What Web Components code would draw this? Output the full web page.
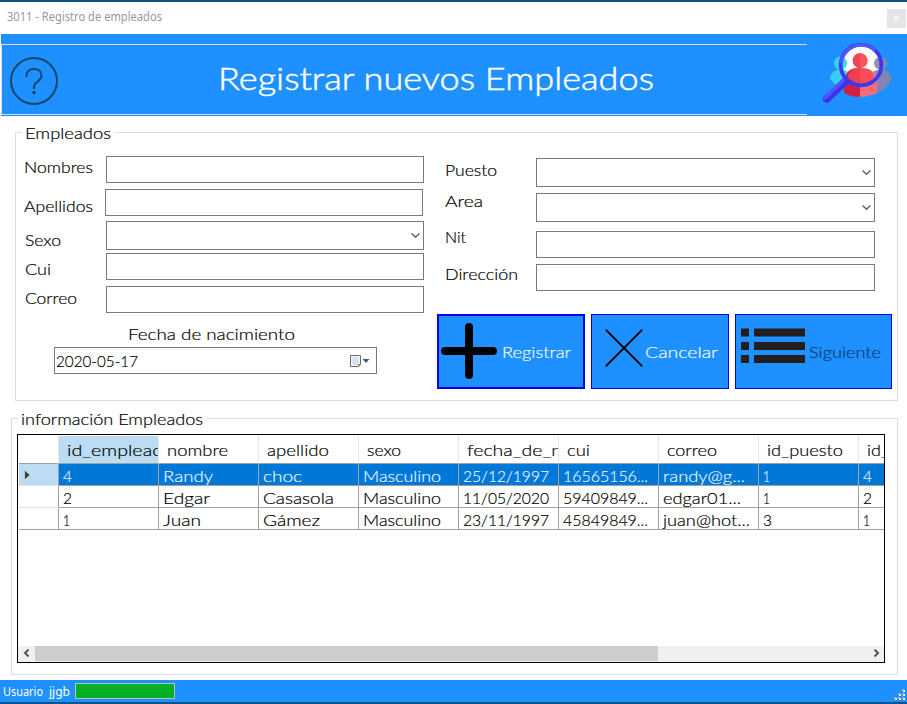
<!DOCTYPE html>
<html lang="es"><head><meta charset="utf-8"><title>3011 - Registro de empleados</title>
<style>
html,body{margin:0;width:907px;height:704px;overflow:hidden;background:#fff}
body{font:300 16.5px/20px Lato,"Noto Sans",sans-serif;color:#000;-webkit-text-stroke:.2px}
</style></head><body>
<employee-window></employee-window>
<script>
const define=(name,html,ready)=>customElements.define(name,class extends HTMLElement{
  connectedCallback(){
    if(this.shadowRoot)return;
    const t=document.createElement('template');t.innerHTML=html;
    this.attachShadow({mode:'open'}).append(t.content.cloneNode(true));
    if(ready)ready(this,this.shadowRoot);
  }
});

/* Text stretched horizontally to the width given in w */
define('fit-text',`<style>:host{display:block;white-space:pre;height:20px;line-height:20px}
span{display:inline-block;transform-origin:0 50%}</style><span><slot></slot></span>`,(el,r)=>{
  const s=r.querySelector('span'),w=+el.getAttribute('w');
  el.style.width=w+'px';
  const n=s.getBoundingClientRect().width;
  if(w&&n)s.style.transform='scaleX('+(w/n)+')';
});

define('title-bar',`<style>:host{display:flex;justify-content:space-between;height:34px;box-sizing:border-box;border-top:2px solid #0b5478;background:#fff;padding:7px 1px 0 7px;font:12px "Noto Sans",sans-serif;color:#999;-webkit-text-stroke:0}
fit-text{margin-top:-2px}
b{width:19px;height:19px;background:#e5e5e5;display:grid;place-items:center}
</style><fit-text w="155"><slot></slot></fit-text><b><svg width="5" height="5" viewBox="0 0 5 5"><path d="M.5 .5L4.5 4.5M4.5 .5L.5 4.5" stroke="#fafafa" stroke-width="1.4"/></svg></b>`);

define('people-search',`<style>:host{display:block;width:100px;height:82px}svg{display:block}</style>
<svg width="100" height="82" viewBox="81 102 300 246">
<defs><clipPath id="lens"><circle cx="243" cy="195" r="58"/></clipPath></defs>
<g fill="#38cdf0"><circle cx="183" cy="190" r="21"/><path d="M149 234Q158 207 184 207Q210 208 224 238L200 270Q167 263 149 234Z"/></g>
<g fill="#8484b4"><circle cx="301" cy="190" r="20"/><path d="M336 236Q326 208 301 208Q276 210 265 237L291 279Q318 267 336 236Z"/></g>
<circle cx="243" cy="195" r="60" fill="#fff"/>
<g clip-path="url(#lens)"><g fill="#45d7ee"><circle cx="181" cy="190" r="20"/><path d="M149 250V207H184Q202 211 214 225V260Z"/></g><g fill="#9290b5"><circle cx="301" cy="190" r="19"/><path d="M336 250V208H301Q280 211 270 224V260Z"/></g></g>
<path d="M192 284V254Q195 205 229 205H240V291Q213 291 192 279Z" fill="#cf2142"/>
<path d="M240 205H254Q290 207 291 255V279Q267 290 240 290Z" fill="#ff6b78"/>
<path d="M203 229Q211 205 229 205H240V255Q217 253 203 235Z" fill="#ed4051"/>
<path d="M240 205H254Q275 208 281 230Q267 255 240 255Z" fill="#f84c58"/>
<path d="M241 159A23 23 0 0 0 241 205Z" fill="#ee4354"/><path d="M240 159A23 23 0 0 1 240 205Z" fill="#f95661"/>
<path d="M198 243L140 297" stroke="#3a32ef" stroke-width="23" stroke-linecap="round"/><path d="M192 239L135 293" stroke="#5254fb" stroke-width="11" stroke-linecap="round"/>
<circle cx="243" cy="195" r="61" fill="none" stroke="#3c38ef" stroke-width="11"/>
<path d="M183 190A61 61 0 0 1 286 152" fill="none" stroke="#4f58ff" stroke-width="10"/>
</svg>`);

define('page-banner',`<style>:host{display:flex;height:82px;margin-left:1px;background:#1e90ff;color:#fff}
div{display:flex;align-items:center;box-sizing:border-box;width:806px;height:71px;margin-top:10px;border:1px solid #d3dbe4;border-right:0;padding:3px 0 0 8px}
svg{flex:none;display:block}
fit-text{font-size:32px;-webkit-text-stroke:.5px;height:40px;line-height:40px;margin:-6px 0 0 160px}
</style><div><svg width="48" height="48" viewBox="0 0 48 48" fill="none" stroke="#10466d" stroke-width="2"><circle cx="24" cy="24" r="23"/><path d="M16.5 20V18C16.5 14.5 19.8 12 24 12C28.500 12 31.500 14.700 31.500 18.500C31.500 24.500 24 24.500 24 30V32"/><path d="M22.500 35.500H25.500" stroke-width="3"/></svg><fit-text w="436"><slot></slot></fit-text></div><people-search></people-search>`);

define('group-box',`<style>:host{display:block;box-sizing:border-box;border:1px solid #dcdcdc}
header{width:max-content;background:#fff;padding:0 4px 0 3px;height:20px;margin:-10px 0 0 6px}
</style><header><slot name="legend"></slot></header><slot></slot>`);

define('v-stack',`<style>:host{display:flex;flex-direction:column;flex:none}</style><slot></slot>`);

define('input-box',`<style>:host{display:flex;align-items:center;box-sizing:border-box;height:27px;border:1px solid #7a7a7a;background:#fff}
svg{display:none;margin:0 3px 0 auto}:host([select]){height:29px}:host([select]) svg{display:block}
</style><slot></slot><svg width="9" height="5" viewBox="0 0 9 5" fill="none" stroke="#555" stroke-width="1.2"><path d="M.5 .5L4.500 4.300L8.500 .5"/></svg>`,el=>{el.setAttribute('role',el.hasAttribute('select')?'combobox':'textbox')});

define('date-box',`<style>:host{display:flex;align-items:center;box-sizing:border-box;width:323px;height:27px;border:1px solid #7a7a7a;padding:0 6px 0 1px}
svg{margin-left:auto}</style><fit-text w="82"><slot></slot></fit-text>
<svg width="21" height="14" viewBox="0 0 21 14"><path d="M2 3H12V12H2Z" fill="#ccc"/><path d="M1.500 1.500H11.500V10L9.500 12.500H1.500Z" fill="#f5f7ff" stroke="#75686b"/><path d="M3.500 4H10M3.500 6H10M3.500 8H10M3.500 10H9" stroke="#b2bdd5" stroke-dasharray="1.500 .5"/><path d="M9 12V10H11Z" fill="#75686b"/><path d="M13.500 5H20.500L17 9Z" fill="#3d5a91"/></svg>`);

const icons={
 plus:`<svg width="56" height="56" viewBox="0 0 56 56"><path d="M4 28H52M28 4V52" stroke="#000" stroke-width="8" stroke-linecap="round"/></svg>`,
 cross:`<svg width="38" height="38" viewBox="0 0 38 38"><path d="M.7 .7L37.300 37.300M37.300 .7L.7 37.300" stroke="#000" stroke-width="1.900"/></svg>`,
 list:`<svg width="64" height="36" viewBox="0 0 64 36"><path fill="#231f20" d="M0 .5H8V8.500H0ZM13 .5H64V8.500H13ZM0 14H8V22H0ZM13 14H64V22H13ZM0 27H8V35H0ZM13 27H64V35H13Z"/></svg>`};
define('action-button',`<style>:host{display:flex;box-sizing:border-box;height:75px;background:#1e90ff;border:1px solid #0000f0;color:#f4faff}
:host([primary]){border-width:2px}:host([muted]){color:#073a70}
svg{display:block}::slotted(fit-text){margin-top:27px}:host([primary]) ::slotted(fit-text){margin-top:26px}i{display:block;flex:none}</style><i></i><slot></slot>`,(el,r)=>{
 const i=r.querySelector('i'),k=el.getAttribute('icon');i.innerHTML=icons[k];
 i.style.margin={plus:'7px 5px 0 2px',cross:'14px 2px 0 13px',list:'13px 4px 0 5px'}[k];
 el.setAttribute('role','button');
});

define('data-cell',`<style>:host{display:block;box-sizing:border-box;flex:none;width:100px;height:22px;overflow:hidden;padding:2px 0 0 4px;border-right:1px solid #a0a0a0;border-bottom:1px solid #a0a0a0}
:host([head]){height:28px;padding:4px 0 0 8px;border-right-color:#e5e5e5}
:host([on]){background:#bcdcf4}
</style><slot></slot>`);

define('data-grid',`<style>:host{display:flex;flex-direction:column;box-sizing:border-box;width:868px;height:229px;border:1px solid #000;overflow:hidden;background:#fff;padding-top:1px}
.row{display:flex;flex:none;margin-left:1px;width:865px;overflow:hidden}
.sel{background:#0078d7;color:#e4f4ff}
.rh{box-sizing:border-box;flex:none;width:40px;border-right:1px solid #a0a0a0;border-bottom:1px solid #e5e5e5;display:flex;align-items:center;padding-left:5px}
.head .rh{border-right-color:#e5e5e5;border-bottom-color:#a0a0a0}.sel .rh{background:#bcdcf4}
.row:last-of-type .rh{border-bottom-color:#a0a0a0}
footer{margin-top:auto;display:flex;height:16px;background:#f0f0f0;align-items:flex-start}
footer i{width:623px;height:15px;background:#cdcdcd;margin-left:5px}
footer svg:first-child{margin:3px 0 0 5px}footer svg:last-child{margin:3px 4px 0 auto}
</style><div id="rows" style="display:contents"></div><footer><svg width="7" height="8" viewBox="0 0 7 8"><path d="M5.500 .5L2 4L5.500 7.500" fill="none" stroke="#555" stroke-width="2"/></svg><i></i><svg width="7" height="8" viewBox="0 0 7 8"><path d="M1.500 .5L5 4L1.500 7.500" fill="none" stroke="#555" stroke-width="2"/></svg></footer>`,(el,r)=>{
 const rows=[
 [['id_emplead',96],['nombre',61],['apellido',62],['sexo',34],['fecha_de_n',95],['cui',23],['correo',50],['id_puesto',76],['id_',22]],
 [['4',9],['Randy',50],['choc',39],['Masculino',78],['25/12/1997',86],['16565156...',85],['randy@g...',82],['1',7],['4',9]],
 [['2',9],['Edgar',47],['Casasola',71],['Masculino',78],['11/05/2020',86],['59409849...',85],['edgar01...',78],['1',7],['2',9]],
 [['1',7],['Juan',38],['Gámez',57],['Masculino',78],['23/11/1997',86],['45849849...',85],['juan@hot...',87],['3',9],['1',7]]];
 r.getElementById('rows').innerHTML=rows.map((c,i)=>`<div class="row ${i==0?'head':i==1?'sel':''}"><div class="rh">${i==1?'<svg width="7" height="10" viewBox="0 0 7 10"><path d="M.5 0V10L6 5Z" fill="#404040" stroke="#fff" stroke-width=".5"/></svg>':''}</div>${c.map(([t,w],j)=>`<data-cell ${i==0?'head':''} ${i==0&&j==0?'on':''}><fit-text w="${w}">${t}</fit-text></data-cell>`).join('')}</div>`).join('');
});

define('status-bar',`<style>:host{display:flex;align-items:flex-start;box-sizing:border-box;height:24px;background:#1e90ff;border-bottom:2px solid #07558f;color:#fff;font:12px "Noto Sans",sans-serif;-webkit-text-stroke:0;padding:0 1px 0 3px}
fit-text{margin:2px 6px 0 0}b{box-sizing:border-box;width:100px;height:16px;margin:3px 0 0 -1px;background:#06b025;border:1px solid #bcbcbc}
svg{margin:9px 0 0 auto}</style><fit-text w="40">Usuario</fit-text><fit-text w="21">jjgb</fit-text><b></b>
<svg width="12" height="12" viewBox="0 0 12 12"><path fill="#fff" d="M9 1h2v2H9zM5 5h2v2H5zM9 5h2v2H9zM1 9h2v2H1zM5 9h2v2H5zM9 9h2v2H9z"/><path fill="#b8b0a8" d="M8 0h2v2H8zM4 4h2v2H4zM8 4h2v2H8zM0 8h2v2H0zM4 8h2v2H4zM8 8h2v2H8z"/></svg>`);

define('employee-form',`<style>:host{display:grid;grid-template-columns:421px 1fr;height:258px}
section{display:flex;align-items:flex-start}
.l .labels{width:81px;margin-left:8px}.l .in{width:319px}
.l .in>*{width:318px;margin-left:1px}.l .in>.ap{margin-left:0}
.birth{margin:11px 0 0 38px}.birth fit-text{margin-left:74px}.birth date-box{margin-top:3px}
.r{margin-left:8px}.r .labels{width:91px}.r .in{width:339px}
nav{display:flex;gap:6px;margin-top:23px}
</style>
<div class="l"><section>
<v-stack class="labels"><fit-text w="69" style="margin-top:14px">Nombres</fit-text><fit-text w="69" style="margin-top:19px">Apellidos</fit-text><fit-text w="36" style="margin:14px 0 0 1px">Sexo</fit-text><fit-text w="26" style="margin:9px 0 0 1px">Cui</fit-text><fit-text w="52" style="margin:9px 0 0 1px">Correo</fit-text></v-stack>
<v-stack class="in"><input-box style="margin-top:13px"></input-box><input-box class="ap" style="margin-top:6px"></input-box><input-box select style="margin-top:5px"></input-box><input-box style="margin-top:3px"></input-box><input-box style="margin-top:6px"></input-box></v-stack></section>
<div class="birth"><fit-text w="167">Fecha de nacimiento</fit-text><date-box>2020-05-17</date-box></div></div>
<div class="rr"><section class="r">
<v-stack class="labels"><fit-text w="52" style="margin-top:17px">Puesto</fit-text><fit-text w="38" style="margin-top:11px">Area</fit-text><fit-text w="21" style="margin-top:16px">Nit</fit-text><fit-text w="73" style="margin-top:17px">Dirección</fit-text></v-stack>
<v-stack class="in"><input-box select style="margin-top:15px"></input-box><input-box select style="margin-top:6px"></input-box><input-box style="margin-top:9px"></input-box><input-box style="margin-top:6px"></input-box></v-stack></section>
<nav><action-button primary icon="plus" style="width:148px"><fit-text w="69">Registrar</fit-text></action-button><action-button icon="cross" style="width:138px"><fit-text w="73">Cancelar</fit-text></action-button><action-button muted icon="list" style="width:157px"><fit-text w="72">Siguiente</fit-text></action-button></nav></div>`);

define('employee-window',`<style>:host{display:flex;flex-direction:column;width:907px;height:704px;background:#fff}
.a{width:883px;height:269px;margin:16px 0 0 15px}
.b{width:887px;height:257px;margin:17px 0 0 11px}
data-grid{margin:5px 0 0 5px}status-bar{margin-top:auto}
</style><title-bar>3011 - Registro de empleados</title-bar><page-banner>Registrar nuevos Empleados</page-banner>
<group-box class="a"><fit-text slot="legend" w="86">Empleados</fit-text><employee-form></employee-form></group-box>
<group-box class="b"><fit-text slot="legend" w="182">información Empleados</fit-text><data-grid></data-grid></group-box>
<status-bar></status-bar>`);
</script></body></html>
